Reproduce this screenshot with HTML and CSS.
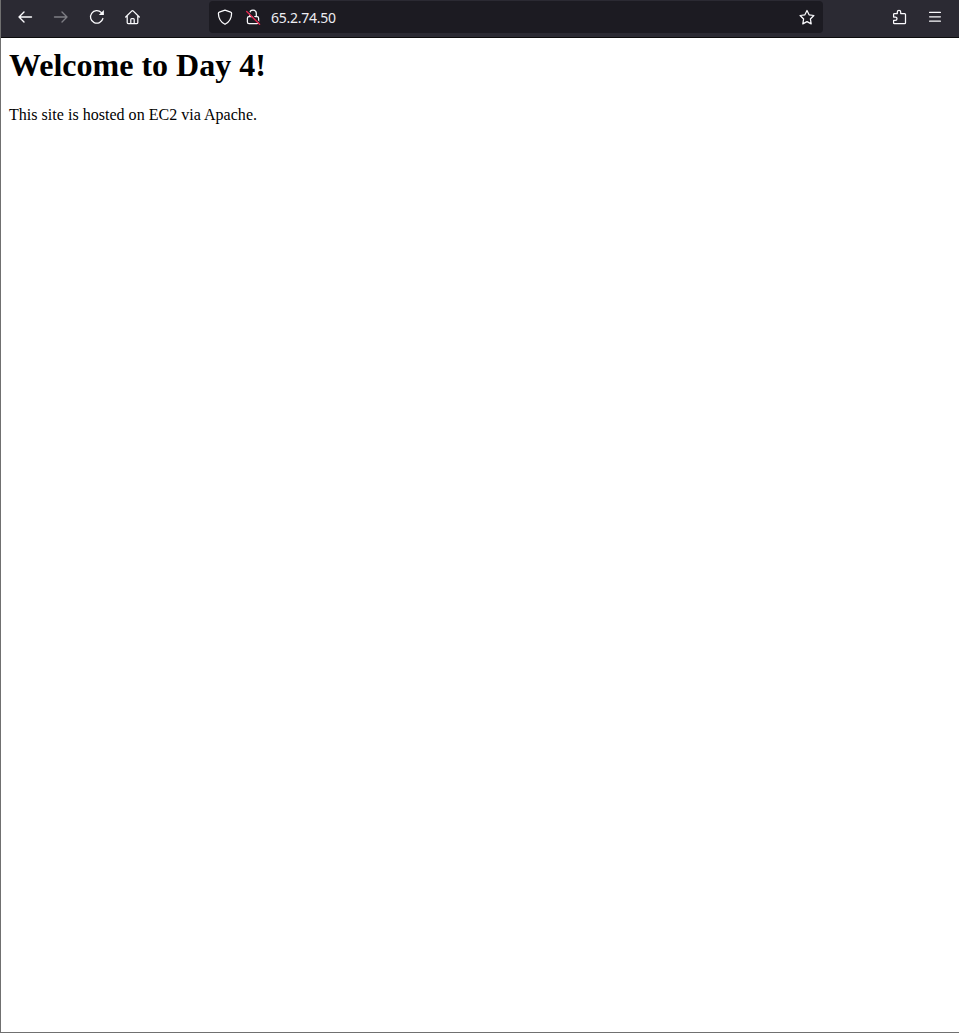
FILE: index.html
```html
<!DOCTYPE html>
<html lang="en">
<head>
<meta charset="utf-8">
<title>65.2.74.50</title>
<link rel="stylesheet" href="styles.css">
</head>
<body>
<div class="window">
  <header class="toolbar">
    <nav class="buttons">
      <button class="tool" aria-label="Back"><svg class="icon" viewBox="0 0 16 16"><path d="M14.500 8H2M7 3 2 8 7 13"/></svg></button>
      <button class="tool disabled" aria-label="Forward"><svg class="icon" viewBox="0 0 16 16"><path d="M1.500 8H14M9 3 14 8 9 13"/></svg></button>
      <button class="tool" aria-label="Reload"><svg class="icon thin" viewBox="0 0 16 16"><path d="M13.900 9.500A6.300 6.300 0 1 1 12.300 3.500"/><path class="solid" d="M14.900 1v5.100H9.800z"/></svg></button>
      <button class="tool" aria-label="Home"><svg class="icon thin" viewBox="0.500 0 16 16"><path d="M1.200 8 7.400 1.900q.6-.5 1.200 0L14.800 8M2.700 7v6.500q0 1 1 1h8.600q1 0 1-1V7M6.300 14.500V10.500q0-.9.900-.9h1.600q.9 0 .9.900v4"/></svg></button>
    </nav>
    <div class="address">
      <svg class="icon thin" viewBox="0 0 16 16"><path d="M8 1.100 13.700 3.200q.9.300.9 1.200C14.500 9.800 12.200 13 8 15.300 3.800 13 1.500 9.800 1.400 4.400q0-.9.900-1.200z"/></svg>
      <svg class="icon thin lock" viewBox="0 0 16 16"><path d="M4.700 7.500V4.500a3.300 3.300 0 0 1 6.600 0v3M4 7.600h8q1.600 0 1.600 1.600v3.900q0 1.600-1.600 1.600H4q-1.600 0-1.600-1.600V9.200q0-1.600 1.600-1.600z"/><path class="gap" d="M2.200 1.300 15.700 14.800"/><path class="slash" d="M1.700 2.400 14.600 15.300"/></svg>
      <span class="url">65.2.74.50</span>
      <svg class="icon star" viewBox="0 0 16 16"><path d="M8 1.500 10.100 5.800 14.900 6.500 11.400 10 12.200 14.900 8 12.600 3.800 14.900 4.600 10 1.100 6.500 5.900 5.800z"/></svg>
    </div>
    <div class="actions">
      <button class="tool" aria-label="Extensions"><svg class="icon thin" viewBox="0 0 16 16"><path d="M2.600 5.400q0-.8.800-.8H6.300V3.100a1.700 1.700 0 0 1 3.400 0v1.500h3.900q.9 0 .9.900v8.300q0 .9-.9.900H3.400q-.8 0-.8-.8v-2.500h1.700a1.700 1.700 0 0 0 0-3.400H2.600z"/></svg></button>
      <button class="tool" aria-label="Menu"><svg class="icon thin" viewBox="0 0 16 16"><path d="M2.600 3.400h10.800M2.600 7.800h10.800M2.600 12.200h10.800"/></svg></button>
    </div>
  </header>
  <main class="page">
    <h1>Welcome to Day 4!</h1>
    <p>This site is hosted on EC2 via Apache.</p>
  </main>
</div>
</body>
</html>
```
FILE: styles.css
```css
* { box-sizing: border-box; }
body { margin: 0; background: #fff; }
.window {
  display: flex;
  flex-direction: column;
  height: 100vh;
  border-left: 1px solid #707070;
  border-bottom: 1px solid #707070;
}
.toolbar {
  display: flex;
  align-items: flex-start;
  height: 38px;
  padding: 1px 6px;
  background: #2b2a33;
  border-bottom: 1px solid #0c0c0d;
  color: #fbfbfe;
}
.buttons, .actions { display: flex; height: 32px; }
.tool {
  display: flex;
  align-items: center;
  justify-content: center;
  width: 36px;
  height: 32px;
  padding: 0;
  border: 0;
  background: none;
  color: inherit;
}
.disabled { opacity: .4; }
.icon {
  flex: none;
  width: 16px;
  height: 16px;
  fill: none;
  stroke: currentColor;
  stroke-width: 1.4;
  stroke-linecap: round;
  stroke-linejoin: round;
}
.thin, .star { stroke-width: 1.25; }
.solid { fill: currentColor; stroke: none; }
.gap { stroke: #1c1b22; }
.slash { stroke: #e22850; stroke-width: 1.4; }
.address {
  display: flex;
  align-items: center;
  width: 614px;
  height: 32px;
  margin-left: 58px;
  padding: 0 8px;
  border-radius: 4px;
  background: #1c1b22;
}
.lock { margin-left: 12px; }
.url {
  flex: 1;
  margin-left: 10px;
  padding-top: 2px;
  color: #ededf2;
  font: 14px/20px "Noto Sans", sans-serif;
  letter-spacing: -.25px;
}
.actions { margin-left: 58px; }
.page {
  flex: 1;
  padding: 8px;
  color: #000;
  font: 16px/18px "Liberation Serif", "Times New Roman", serif;
}
h1 { margin: 0 0 21px; font-size: 32px; line-height: 39px; }
p { margin: 0; letter-spacing: .025px; }
```
